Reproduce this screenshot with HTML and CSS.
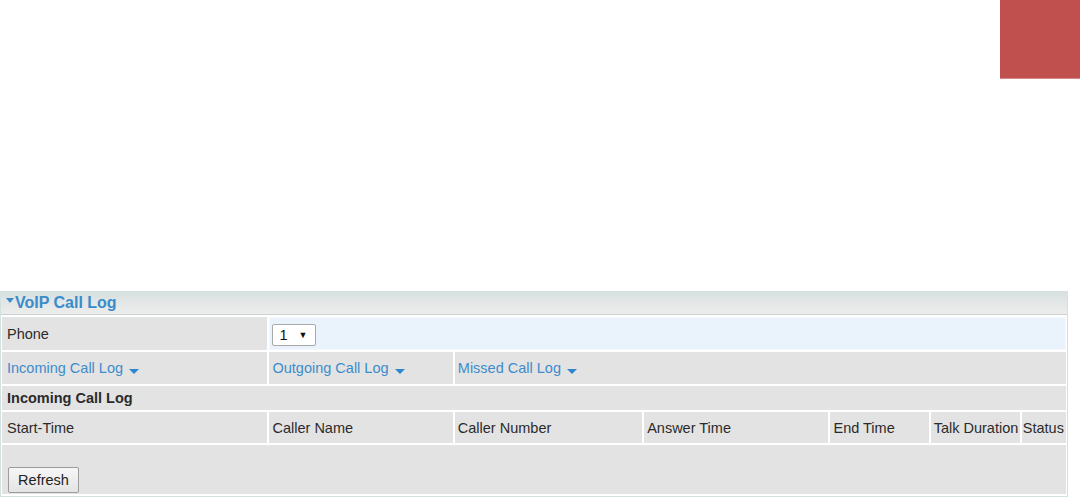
FILE: index.html
```html
<!DOCTYPE html>
<html>
<head>
<meta charset="utf-8">
<link rel="stylesheet" href="styles.css">
</head>
<body>
<div class="corner"></div>
<div class="panel">
  <div class="panel-head"><span class="head-arrow"></span>VoIP Call Log</div>
  <table class="grid">
    <colgroup>
      <col class="c1"><col class="c2"><col class="c3"><col class="c4"><col class="c5"><col class="c6"><col class="c7">
    </colgroup>
    <tr class="row-phone">
      <td>Phone</td>
      <td colspan="6" class="blue">
        <span class="select"><span class="sel-val">1</span><span class="sel-arrow">▼</span></span>
      </td>
    </tr>
    <tr class="row-links">
      <td><a class="link">Incoming Call Log<span class="caret"></span></a></td>
      <td><a class="link">Outgoing Call Log<span class="caret"></span></a></td>
      <td colspan="5"><a class="link">Missed Call Log<span class="caret"></span></a></td>
    </tr>
    <tr class="row-title">
      <td colspan="7">Incoming Call Log</td>
    </tr>
    <tr class="row-cols">
      <td>Start-Time</td>
      <td>Caller Name</td>
      <td>Caller Number</td>
      <td>Answer Time</td>
      <td>End Time</td>
      <td>Talk Duration</td>
      <td class="last">Status</td>
    </tr>
    <tr class="row-btn">
      <td colspan="7"><button class="btn">Refresh</button></td>
    </tr>
  </table>
</div>
</body>
</html>
```

FILE: styles.css
```css
html, body {
  margin: 0;
  padding: 0;
  background: #ffffff;
}
body {
  font-family: "Liberation Sans", Arial, sans-serif;
  font-size: 14.5px;
  color: #2b2b2b;
  width: 1080px;
  height: 499px;
  overflow: hidden;
  position: relative;
}
.corner {
  position: absolute;
  top: 0;
  right: 0;
  width: 80px;
  height: 78px;
  background: #c0504d;
  border-bottom: 1px solid #d98b89;
}
.panel {
  margin-top: 291px;
  width: 1066px;
  border: 1px solid #cfe1e1;
  border-top: none;
  background: #ffffff;
}
.panel-head {
  height: 23px;
  padding-left: 5px;
  font-weight: bold;
  font-size: 16px;
  color: #3a8ccb;
  background: linear-gradient(#d6dfdf, #e6e8e8 60%, #ececec);
  border-bottom: 1px solid #c9d2d2;
  display: flex;
  align-items: center;
}
.head-arrow {
  display: inline-block;
  width: 0;
  height: 0;
  border-left: 4px solid transparent;
  border-right: 4px solid transparent;
  border-top: 5px solid #3a8ccb;
  margin-right: 1px;
  margin-top: -4px;
}
.grid {
  border-collapse: separate;
  border-spacing: 2px;
  margin: 0 -1px;
  width: 1068px;
  table-layout: fixed;
}
.c1 { width: 265px; }
.c2 { width: 183px; }
.c3 { width: 187px; }
.c4 { width: 184px; }
.c5 { width: 98px; }
.c6 { width: 89px; }
.c7 { width: 44px; }
.grid td {
  background: #e3e3e3;
  padding: 0 0 0 3px;
  vertical-align: middle;
  white-space: nowrap;
  overflow: hidden;
}
.grid td.blue {
  background: #eaf3fb;
  box-shadow: inset 0 0 0 1px #f4f9fd;
}
.grid td.last {
  padding-left: 1px;
}
.row-phone td { height: 33px; }
.row-phone td:first-child { padding-left: 5px; }
.row-links td { height: 32px; }
.row-links td:first-child { padding-left: 5px; }
.row-title td {
  height: 24px;
  font-weight: bold;
  padding-left: 5px;
}
.row-cols td { height: 31px; }
.row-cols td:first-child { padding-left: 5px; }
.row-btn td {
  height: 48px;
  vertical-align: bottom;
  padding: 0 0 1px 6px;
}
.select {
  display: inline-flex;
  align-items: center;
  width: 42px;
  height: 20px;
  border: 1px solid #a9a9a9;
  border-radius: 2px;
  background: #ffffff;
  font-size: 14.5px;
  color: #111;
  margin-top: 2px;
}
.sel-val {
  padding-left: 6px;
  width: 14px;
}
.sel-arrow {
  font-size: 9px;
  margin-left: 5px;
}
.link {
  color: #3d8ccd;
  text-decoration: none;
  display: inline-flex;
  align-items: center;
}
.caret {
  display: inline-block;
  width: 0;
  height: 0;
  border-left: 5px solid transparent;
  border-right: 5px solid transparent;
  border-top: 5px solid #2e86cf;
  margin-left: 6px;
  margin-top: 6px;
}
.btn {
  font-family: "Liberation Sans", Arial, sans-serif;
  font-size: 14.5px;
  color: #222;
  height: 26px;
  width: 71px;
  padding: 0;
  border: 1px solid #9c9c9c;
  border-radius: 2px;
  background: linear-gradient(#f6f6f6, #e4e4e4);
  display: block;
}
```
